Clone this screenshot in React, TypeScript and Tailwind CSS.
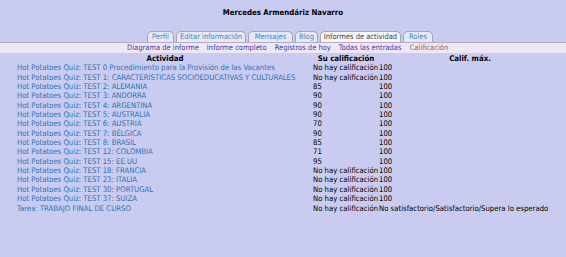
import React from "react";

const tabs = [
  { label: "Perfil", w: "w-[27px]" },
  { label: "Editar información", w: "w-[70px]" },
  { label: "Mensajes", w: "w-[45px]" },
  { label: "Blog", w: "w-[23px]" },
  { label: "Informes de actividad", w: "w-[81px]", active: true },
  { label: "Roles", w: "w-[30px]" },
];

const subnav = [
  "Diagrama de informe",
  "Informe completo",
  "Registros de hoy",
  "Todas las entradas",
];

const NONE = "No hay calificación";

const rows: [string, string, string][] = [
  ["Hot Potatoes Quiz: TEST 0 Procedimiento para la Provisión de las Vacantes", NONE, "100"],
  ["Hot Potatoes Quiz: TEST 1: CARACTERÍSTICAS SOCIOEDUCATIVAS Y CULTURALES", NONE, "100"],
  ["Hot Potatoes Quiz: TEST 2: ALEMANIA", "85", "100"],
  ["Hot Potatoes Quiz: TEST 3: ANDORRA", "90", "100"],
  ["Hot Potatoes Quiz: TEST 4: ARGENTINA", "90", "100"],
  ["Hot Potatoes Quiz: TEST 5: AUSTRALIA", "90", "100"],
  ["Hot Potatoes Quiz: TEST 6: AUSTRIA", "70", "100"],
  ["Hot Potatoes Quiz: TEST 7: BÉLGICA", "90", "100"],
  ["Hot Potatoes Quiz: TEST 8: BRASIL", "85", "100"],
  ["Hot Potatoes Quiz: TEST 12: COLOMBIA", "71", "100"],
  ["Hot Potatoes Quiz: TEST 15: EE.UU", "95", "100"],
  ["Hot Potatoes Quiz: TEST 18: FRANCIA", NONE, "100"],
  ["Hot Potatoes Quiz: TEST 23: ITALIA", NONE, "100"],
  ["Hot Potatoes Quiz: TEST 30: PORTUGAL", NONE, "100"],
  ["Hot Potatoes Quiz: TEST 37: SUIZA", NONE, "100"],
  ["Tarea: TRABAJO FINAL DE CURSO", NONE, "No satisfactorio/Satisfactorio/Supera lo esperado"],
];

export default function App() {
  return (
    <div className="w-[566px] h-[257px] overflow-hidden bg-[#c9ccf0] text-[7.7px] text-black font-stretch-condensed font-['DejaVu_Sans_Condensed','DejaVu_Sans',sans-serif]">
      <div className="pt-[8px] h-[31px] text-center font-bold text-[7.8px] leading-[10px]">
        Mercedes Armendáriz Navarro
      </div>

      {/* tabs */}
      <div className="flex gap-[2px] pl-[147px] h-[11px]">
        {tabs.map((t) => (
          <div
            key={t.label}
            className={`${t.w} h-[11px] flex items-center justify-center whitespace-nowrap rounded-t-[5px] border border-b-0 border-[#a4a4b4] leading-[10px] text-[7.5px] ${
              t.active ? "bg-[#f6f6fb] text-[#444]" : "bg-[#e6e8f8] text-[#3a8ab4]"
            }`}
          >
            {t.label}
          </div>
        ))}
      </div>

      {/* sub navigation */}
      <div className="h-[11px] border-t border-[#b4aac4] bg-[#efe8f4] flex items-center gap-[8px] pl-[127px] leading-[10px] whitespace-nowrap text-[7.5px]">
        {subnav.map((s) => (
          <span key={s} className="text-[#3b3bb0]">
            {s}
          </span>
        ))}
        <span className="text-[#707070]">Calificación</span>
      </div>

      {/* grade table */}
      <div className="ml-[17px] mt-[1px] grid grid-cols-[296px_66px_182px] leading-[9.35px] whitespace-nowrap">
        <div className="text-center font-bold text-[7.8px]">Actividad</div>
        <div className="text-center font-bold text-[7.8px]">Su calificación</div>
        <div className="text-center font-bold text-[7.8px]">Calif. máx.</div>
        {rows.map(([name, grade, max]) => (
          <React.Fragment key={name}>
            <div className="text-[#2f72b4]">{name}</div>
            <div>{grade}</div>
            <div>{max}</div>
          </React.Fragment>
        ))}
      </div>
    </div>
  );
}
